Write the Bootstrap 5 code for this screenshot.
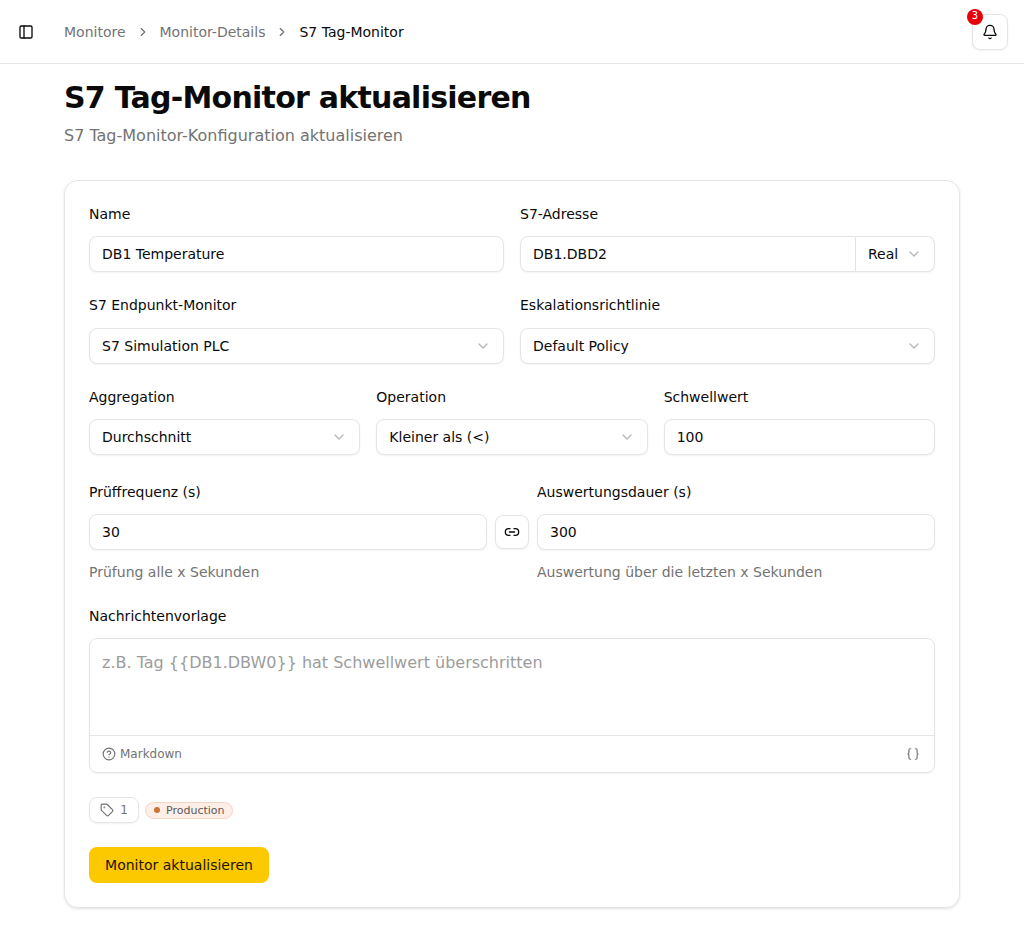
<!DOCTYPE html>
<html lang="de">
<head>
<meta charset="utf-8">
<meta name="viewport" content="width=device-width, initial-scale=1">
<title>S7 Tag-Monitor aktualisieren</title>
<link href="https://cdn.jsdelivr.net/npm/bootstrap@5.3.0/dist/css/bootstrap.min.css" rel="stylesheet">
<style>
body{font-family:"DejaVu Sans",sans-serif;font-size:14px;line-height:20px;color:#0a0a0a;background:#fff}
svg{fill:none;stroke:currentColor;stroke-width:2;stroke-linecap:round;stroke-linejoin:round;flex:none;display:block}
.muted{color:#737373}
.topbar{height:64px;border-bottom:1px solid #e5e5e5;padding:0 16px 0 18px}
.topbar .breadcrumb{margin-left:30px;gap:10px}
.topbar a{color:#737373;text-decoration:none}
.outline-btn{background:#fff;border:1px solid #e5e5e5;border-radius:8px;box-shadow:0 1px 2px rgba(0,0,0,.05);padding:0;color:#0a0a0a}
.bell{width:36px;height:36px}
.count{top:-6px;left:-6px;width:16px;height:16px;border-radius:50%;background:#e7000b;color:#fff;font-size:10px;line-height:14px;text-align:center}
.page{padding:14px 64px 33px}
h1{font-size:30px;line-height:36px;font-weight:700;letter-spacing:-.75px;margin:2px 0 8px}
.sub{font-size:16px;line-height:24px;margin-bottom:32px}
.panel{border:1px solid #e5e5e5;border-radius:14px;padding:24px;height:728px;box-shadow:0 1px 3px rgba(0,0,0,.1),0 1px 2px -1px rgba(0,0,0,.1)}
.form-label{display:block;line-height:18px;margin:0 0 13px}
.form-control{height:36px;padding:0 12px;font-size:14px;line-height:34px;color:#0a0a0a;border:1px solid #e5e5e5;border-radius:8px;box-shadow:0 1px 2px rgba(0,0,0,.05)}
.picker svg{color:#737373;opacity:.5}
.addr .form-control:first-child{border-radius:8px 0 0 8px}
.addr .picker{width:79px;flex:none;border-left:0;border-radius:0 8px 8px 0}
.monitor-row .form-label{margin-bottom:14px}
.timing{margin-top:28px;margin-bottom:25px}
.timing-field{flex:1 1 0;min-width:0}
.link-btn{width:34px;height:34px;margin-top:32px;flex:none}
.help{margin-top:12px}
.editor{border:1px solid #e5e5e5;border-radius:8px;height:135px;box-shadow:0 1px 2px rgba(0,0,0,.05)}
.editor textarea{height:96px;border:0;outline:0;resize:none;background:transparent;padding:12px 12px 11px;font-size:16px;line-height:24px;color:#0a0a0a}
.editor textarea::placeholder{color:#737373;opacity:.7}
.editor-foot{height:37px;border-top:1px solid #e5e5e5;padding:0 14px 0 12px;font-size:12px;line-height:16px}
.tags{gap:6px}
.tag-btn{width:50px;height:26px;gap:6px;font-size:12px;line-height:16px;color:#737373}
.tag-pill{width:88px;height:17px;border:1px solid #f6d5c4;border-radius:9px;background:#fdeee8;color:#5f5a57;font-size:11px;line-height:15px;padding-left:8px}
.tag-dot{width:6px;height:6px;border-radius:50%;background:#cb7434;margin-right:6px}
.save{width:180px;height:36px;background:#fcc800;border:0;border-radius:8px;font-size:14px;padding:0;color:#1c1300}
.save:hover{background:#ebba00}
</style>
</head>
<body>
<header class="topbar d-flex align-items-center">
  <svg width="16" height="16" viewBox="0 0 24 24"><rect width="18" height="18" x="3" y="3" rx="2"/><path d="M9 3v18"/></svg>
  <nav class="breadcrumb d-flex align-items-center mb-0">
    <a href="#">Monitore</a>
    <svg class="muted" width="14" height="14" viewBox="0 0 24 24"><path d="m9 18 6-6-6-6"/></svg>
    <a href="#">Monitor-Details</a>
    <svg class="muted" width="14" height="14" viewBox="0 0 24 24"><path d="m9 18 6-6-6-6"/></svg>
    <span>S7 Tag-Monitor</span>
  </nav>
  <button class="outline-btn bell position-relative ms-auto d-flex align-items-center justify-content-center" aria-label="Benachrichtigungen">
    <svg width="16" height="16" viewBox="0 0 24 24"><path d="M10.268 21a2 2 0 0 0 3.464 0"/><path d="M3.262 15.326A1 1 0 0 0 4 17h16a1 1 0 0 0 .74-1.673C19.41 13.956 18 12.499 18 8A6 6 0 0 0 6 8c0 4.499-1.411 5.956-2.738 7.326"/></svg>
    <span class="count position-absolute">3</span>
  </button>
</header>
<main class="page">
  <h1>S7 Tag-Monitor aktualisieren</h1>
  <p class="sub muted">S7 Tag-Monitor-Konfiguration aktualisieren</p>
  <form class="panel">
    <div class="row gx-3 mb-4">
      <div class="col-6"><label class="form-label" for="name">Name</label><input id="name" class="form-control" value="DB1 Temperature"></div>
      <div class="col-6"><label class="form-label" for="addr">S7-Adresse</label>
        <div class="addr d-flex"><input id="addr" class="form-control" value="DB1.DBD2">
          <button type="button" class="form-control picker d-flex align-items-center justify-content-between">Real<svg width="16" height="16" viewBox="0 0 24 24"><path d="m6 9 6 6 6-6"/></svg></button></div></div>
    </div>
    <div class="monitor-row row gx-3 mb-4">
      <div class="col-6"><span class="form-label">S7 Endpunkt-Monitor</span><button type="button" class="form-control picker d-flex align-items-center justify-content-between">S7 Simulation PLC<svg width="16" height="16" viewBox="0 0 24 24"><path d="m6 9 6 6 6-6"/></svg></button></div>
      <div class="col-6"><span class="form-label">Eskalationsrichtlinie</span><button type="button" class="form-control picker d-flex align-items-center justify-content-between">Default Policy<svg width="16" height="16" viewBox="0 0 24 24"><path d="m6 9 6 6 6-6"/></svg></button></div>
    </div>
    <div class="row gx-3">
      <div class="col-4"><span class="form-label">Aggregation</span><button type="button" class="form-control picker d-flex align-items-center justify-content-between">Durchschnitt<svg width="16" height="16" viewBox="0 0 24 24"><path d="m6 9 6 6 6-6"/></svg></button></div>
      <div class="col-4"><span class="form-label">Operation</span><button type="button" class="form-control picker d-flex align-items-center justify-content-between">Kleiner als (&lt;)<svg width="16" height="16" viewBox="0 0 24 24"><path d="m6 9 6 6 6-6"/></svg></button></div>
      <div class="col-4"><label class="form-label" for="limit">Schwellwert</label><input id="limit" class="form-control" value="100"></div>
    </div>
    <div class="d-flex gap-2 timing">
      <div class="timing-field"><label class="form-label" for="freq">Prüffrequenz (s)</label><input id="freq" class="form-control" value="30"><div class="help muted">Prüfung alle x Sekunden</div></div>
      <button type="button" class="outline-btn link-btn d-flex align-items-center justify-content-center" aria-label="Verknüpfen"><svg width="16" height="16" viewBox="0 0 24 24"><path d="M9 17H7A5 5 0 0 1 7 7h2M15 7h2a5 5 0 1 1 0 10h-2M8 12h8"/></svg></button>
      <div class="timing-field"><label class="form-label" for="window">Auswertungsdauer (s)</label><input id="window" class="form-control" value="300"><div class="help muted">Auswertung über die letzten x Sekunden</div></div>
    </div>
    <label class="form-label" for="msg">Nachrichtenvorlage</label>
    <div class="editor">
      <textarea id="msg" class="w-100 d-block" placeholder="z.B. Tag {{DB1.DBW0}} hat Schwellwert überschritten"></textarea>
      <div class="editor-foot muted d-flex align-items-center justify-content-between">
        <span class="d-flex align-items-center gap-1"><svg width="14" height="14" viewBox="0 0 24 24"><circle cx="12" cy="12" r="10"/><path d="M9.09 9a3 3 0 0 1 5.83 1c0 2-3 3-3 3M12 17h.01"/></svg>Markdown</span>
        <svg width="14" height="14" viewBox="0 0 24 24"><path d="M8 3H7a2 2 0 0 0-2 2v5a2 2 0 0 1-2 2 2 2 0 0 1 2 2v5c0 1.1.9 2 2 2h1M16 21h1a2 2 0 0 0 2-2v-5c0-1.1.9-2 2-2a2 2 0 0 1-2-2V5a2 2 0 0 0-2-2h-1"/></svg>
      </div>
    </div>
    <div class="d-flex align-items-center my-4 tags">
      <button type="button" class="outline-btn tag-btn d-flex align-items-center justify-content-center"><svg width="14" height="14" viewBox="0 0 24 24"><path d="M12.586 2.586A2 2 0 0 0 11.172 2H4a2 2 0 0 0-2 2v7.172a2 2 0 0 0 .586 1.414l8.704 8.704a2.426 2.426 0 0 0 3.42 0l6.58-6.58a2.426 2.426 0 0 0 0-3.42z"/><circle cx="7.5" cy="7.5" r=".5" fill="currentColor"/></svg><span>1</span></button>
      <span class="tag-pill d-flex align-items-center"><i class="tag-dot"></i>Production</span>
    </div>
    <button type="submit" class="save btn">Monitor aktualisieren</button>
  </form>
</main>
<script src="https://cdn.jsdelivr.net/npm/bootstrap@5.3.0/dist/js/bootstrap.bundle.min.js"></script>
</body>
</html>
